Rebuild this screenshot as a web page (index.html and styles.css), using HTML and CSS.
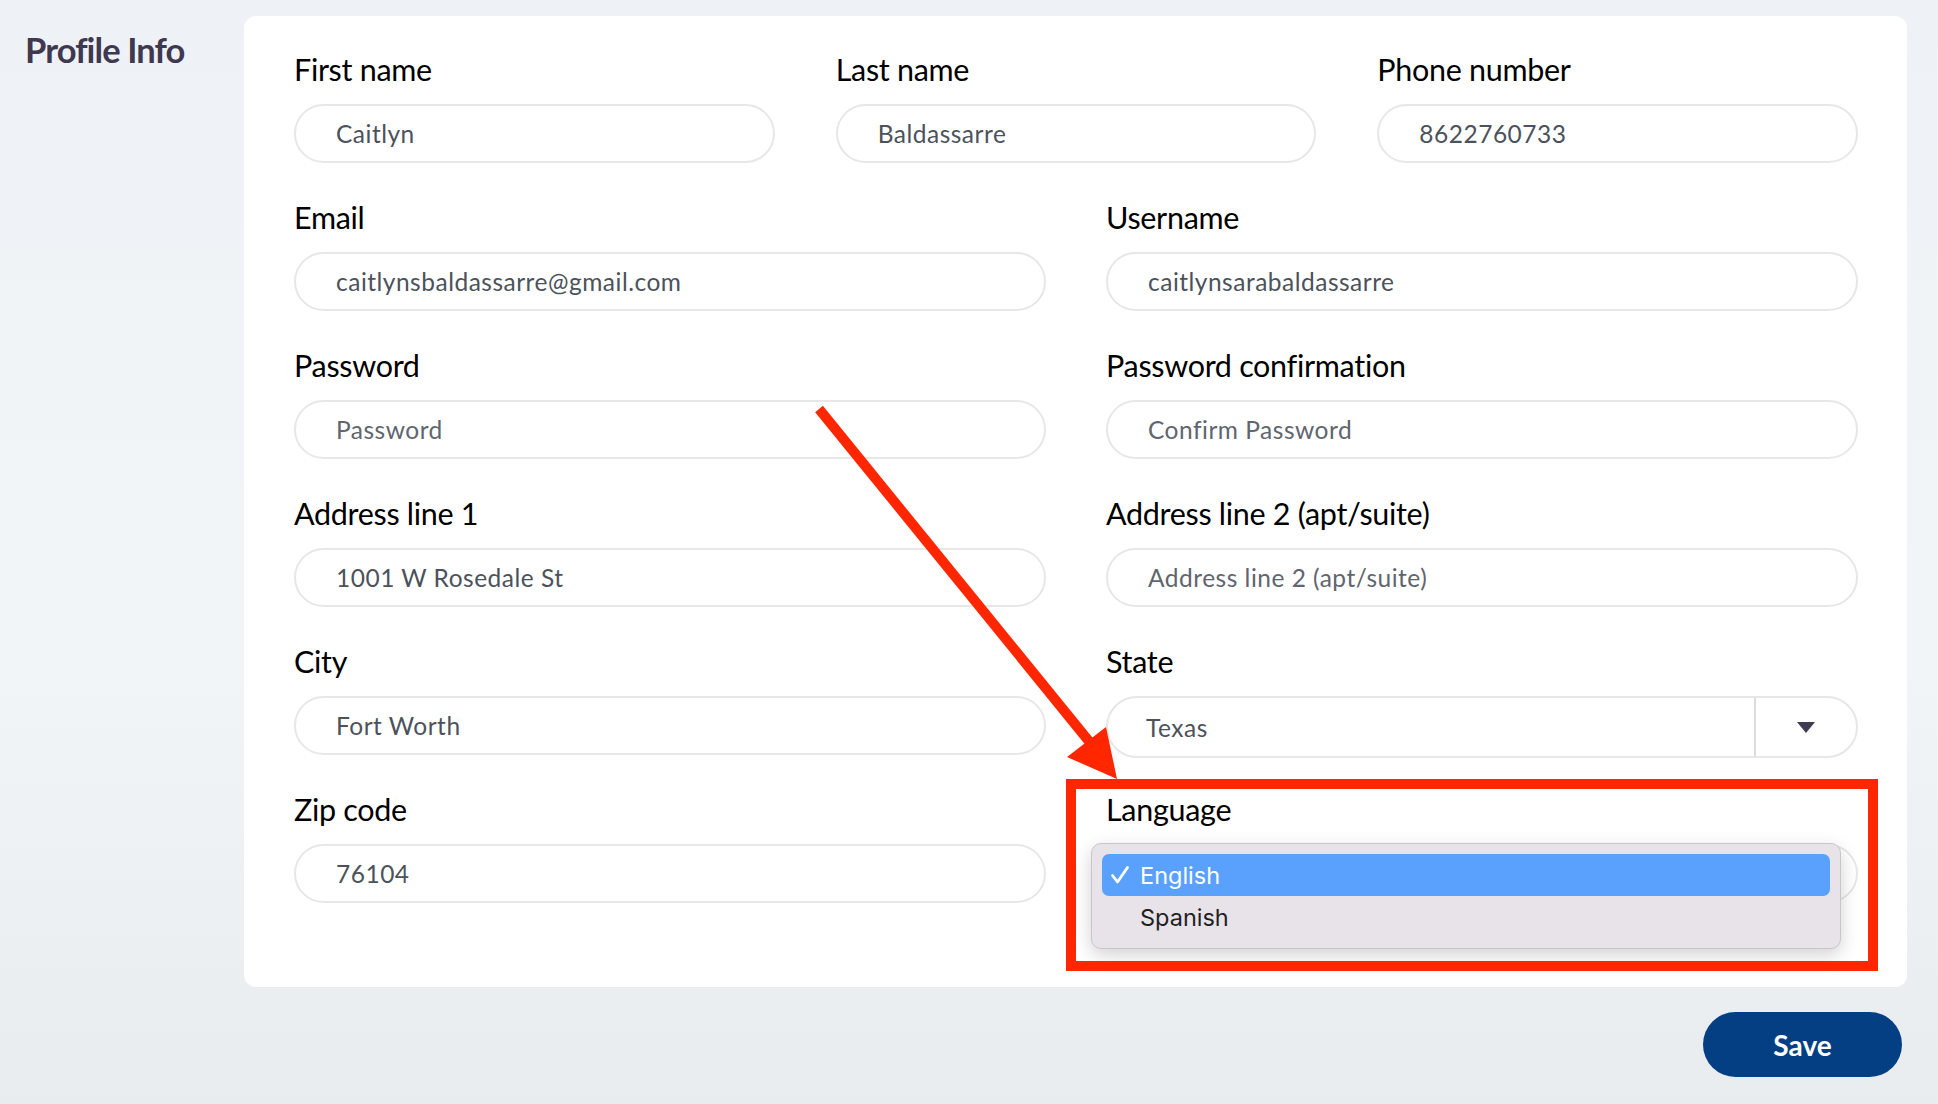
FILE: index.html
```html
<!DOCTYPE html>
<html>
<head>
    <meta charset="UTF-8">
    <meta name="viewport" content="width=device-width, initial-scale=1.0">
    <title>Profile Info</title>
    <link rel="stylesheet" href="styles.css">
</head>
<body>
    <div class="page">
        <div class="sidebar">
            <h2 class="side-title">Profile Info</h2>
        </div>
        <div class="main">
            <form class="card">
                <div class="row row-3">
                    <div class="field">
                        <label>First name</label>
                        <input class="input" type="text" value="Caitlyn">
                    </div>
                    <div class="field">
                        <label>Last name</label>
                        <input class="input" type="text" value="Baldassarre">
                    </div>
                    <div class="field">
                        <label>Phone number</label>
                        <input class="input" type="text" value="8622760733">
                    </div>
                </div>
                <div class="row row-2">
                    <div class="field">
                        <label>Email</label>
                        <input class="input" type="text" value="caitlynsbaldassarre@gmail.com">
                    </div>
                    <div class="field">
                        <label>Username</label>
                        <input class="input" type="text" value="caitlynsarabaldassarre">
                    </div>
                </div>
                <div class="row row-2">
                    <div class="field">
                        <label>Password</label>
                        <input class="input" type="password" placeholder="Password">
                    </div>
                    <div class="field">
                        <label>Password confirmation</label>
                        <input class="input" type="password" placeholder="Confirm Password">
                    </div>
                </div>
                <div class="row row-2">
                    <div class="field">
                        <label>Address line 1</label>
                        <input class="input" type="text" value="1001 W Rosedale St">
                    </div>
                    <div class="field">
                        <label>Address line 2 (apt/suite)</label>
                        <input class="input" type="text" placeholder="Address line 2 (apt/suite)">
                    </div>
                </div>
                <div class="row row-2">
                    <div class="field">
                        <label>City</label>
                        <input class="input" type="text" value="Fort Worth">
                    </div>
                    <div class="field">
                        <label>State</label>
                        <div class="select select-state">
                            <span class="select-value">Texas</span>
                            <span class="select-caret"></span>
                        </div>
                    </div>
                </div>
                <div class="row row-2">
                    <div class="field">
                        <label>Zip code</label>
                        <input class="input" type="text" value="76104">
                    </div>
                    <div class="field">
                        <label>Language</label>
                        <div class="lang-wrap">
                            <div class="select select-plain"></div>
                            <div class="menu">
                                <div class="menu-item active">
                                    <span class="check">
                                        <svg width="20" height="20" viewBox="0 0 20 20"><path d="M2.5 10.5 L7.5 17 L17.5 2.5" fill="none" stroke="white" stroke-width="2.8" stroke-linecap="round" stroke-linejoin="round"/></svg>
                                    </span>English
                                </div>
                                <div class="menu-item"><span class="check"></span>Spanish</div>
                            </div>
                        </div>
                    </div>
                </div>
            </form>
            <div class="actions">
                <button class="save-btn" type="button">Save</button>
            </div>
        </div>
    </div>

    <svg class="annotation" width="1938" height="1104" viewBox="0 0 1938 1104">
        <rect x="1071" y="784" width="802" height="182" fill="none" stroke="#ff2600" stroke-width="10"/>
        <line x1="819" y1="409" x2="1092" y2="745" stroke="#ff2600" stroke-width="10"/>
        <polygon points="1117,779 1067,757 1106,727" fill="#ff2600"/>
    </svg>
</body>
</html>
```

FILE: styles.css
```css
body {
    margin: 0;
    padding: 0;
    min-height: 100vh;
    background: linear-gradient(180deg, #eef2f6 0%, #f2f5f8 60%, #e9ecef 100%);
    font-family: Lato, "Noto Sans", sans-serif;
    position: relative;
}
.page {
    display: flex;
    height: 1104px;
    overflow: hidden;
}
.sidebar {
    width: 244px;
    flex-shrink: 0;
}
.side-title {
    margin: 0;
    padding: 29px 0 0 25px;
    font-size: 34.5px;
    font-weight: 700;
    letter-spacing: -0.9px;
    color: #3f3950;
}
.main {
    flex: 1;
    padding: 16px 31px 0 0;
}
.card {
    background: white;
    border-radius: 12px;
    padding: 35px 49px 84px 50px;
    display: flex;
    flex-direction: column;
    gap: 36px;
}
.row {
    display: grid;
    gap: 61px;
}
.row-3 {
    grid-template-columns: repeat(3, 1fr);
}
.row-2 {
    grid-template-columns: repeat(2, 1fr);
    gap: 60px;
}
.field {
    display: flex;
    flex-direction: column;
    gap: 17px;
}
.field label {
    font-size: 30.5px;
    line-height: 36px;
    color: #000;
    letter-spacing: -0.3px;
}
.input {
    box-sizing: border-box;
    height: 59px;
    width: 100%;
    border: 2px solid #e7e7e7;
    border-radius: 30px;
    padding: 0 0 0 40px;
    font-family: Lato, "Noto Sans", sans-serif;
    font-size: 24.5px;
    letter-spacing: 0.5px;
    color: #4c525c;
    outline: none;
    background: white;
}
.input::placeholder {
    color: #60656e;
}
.select {
    box-sizing: border-box;
    height: 59px;
    border: 2px solid #e7e7e7;
    border-radius: 31px;
    display: flex;
    align-items: center;
    background: white;
}
.select-state {
    height: 62px;
    margin-bottom: -3px;
}
.select-value {
    flex: 1;
    padding-left: 38px;
    font-size: 24.5px;
    letter-spacing: 0.5px;
    color: #4c525c;
}
.select-caret {
    width: 100px;
    height: 100%;
    border-left: 2px solid #dcdcdc;
    display: flex;
    align-items: center;
    justify-content: center;
}
.select-caret::after {
    content: "";
    width: 0;
    height: 0;
    border-left: 9px solid transparent;
    border-right: 9px solid transparent;
    border-top: 11px solid #403c4f;
}
.lang-wrap {
    position: relative;
}
.select-plain {
    border-radius: 30px;
}
.menu {
    position: absolute;
    left: -15px;
    top: -1px;
    width: 750px;
    box-sizing: border-box;
    padding: 10px;
    background: #e8e3e9;
    border: 1px solid #c9c6cb;
    border-radius: 10px;
    box-shadow: 0 6px 18px rgba(0, 0, 0, 0.18);
    font-family: Inter, "Noto Sans", sans-serif;
}
.menu-item {
    height: 42px;
    display: flex;
    align-items: center;
    font-size: 23.5px;
    color: #1f1f22;
    border-radius: 7px;
}
.menu-item.active {
    background: #5aa1fe;
    color: white;
}
.check {
    width: 38px;
    padding-left: 8px;
    box-sizing: border-box;
    display: flex;
    align-items: center;
}
.actions {
    display: flex;
    justify-content: flex-end;
    padding: 25px 5px 0 0;
}
.save-btn {
    width: 199px;
    height: 65px;
    border: none;
    border-radius: 33px;
    background: #033f82;
    color: white;
    font-family: Lato, "Noto Sans", sans-serif;
    font-size: 28px;
    font-weight: 700;
    cursor: pointer;
}
.annotation {
    position: absolute;
    left: 0;
    top: 0;
    pointer-events: none;
}
```
